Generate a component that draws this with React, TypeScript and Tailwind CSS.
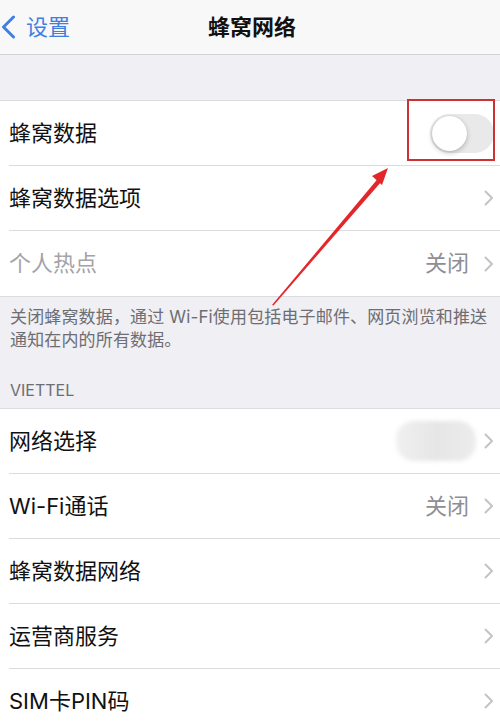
import React from 'react'

const font = { fontFamily: '"Inter", "Noto Sans CJK SC", sans-serif' }

function Chevron() {
  return (
    <svg width="10" height="16" viewBox="0 0 10 16" className="shrink-0">
      <path d="M1.5 1.5 L8 8 L1.5 14.5" fill="none" stroke="#c4c4c8" strokeWidth="2" strokeLinecap="round" strokeLinejoin="round" />
    </svg>
  )
}

interface RowProps {
  label: string
  value?: string
  muted?: boolean
  last?: boolean
  right?: React.ReactNode
}

function Row({ label, value, muted, last, right }: RowProps) {
  return (
    <div className="flex h-[65px] items-stretch bg-white pl-[9px]">
      <div className={`flex flex-1 items-center justify-between pr-[6px] ${last ? '' : 'border-b border-[#dcdce0]'}`}>
        <span className={`text-[22px] ${muted ? 'text-[#a3a3a8]' : 'text-[#111]'}`}>{label}</span>
        {right ?? (
          <div className="flex items-center gap-[15px]">
            {value && <span className="text-[22px] text-[#8e8e93]">{value}</span>}
            <Chevron />
          </div>
        )}
      </div>
    </div>
  )
}

function Toggle() {
  return (
    <div className="h-[39px] w-[64px] rounded-full bg-[#e9e9ea] p-[2px]">
      <div className="h-[35px] w-[35px] rounded-full bg-white shadow-[0_2px_5px_rgba(0,0,0,0.22),0_0_1px_rgba(0,0,0,0.2)]" />
    </div>
  )
}

export default function App() {
  return (
    <div className="relative h-[728px] w-[500px] overflow-hidden bg-[#efeff4]" style={font}>
      {/* Nav bar */}
      <div className="relative flex h-[55px] items-center border-b border-[#d3d3d6] bg-[#f8f8f8]">
        <div className="flex items-center gap-[10px] pl-[1px] text-[#3f7fe0]">
          <svg width="15" height="24" viewBox="0 0 15 24">
            <path d="M12.5 2 L2.5 12 L12.5 22" fill="none" stroke="#3f7fe0" strokeWidth="3" strokeLinecap="round" strokeLinejoin="round" />
          </svg>
          <span className="text-[22px]">设置</span>
        </div>
        <span className="absolute left-1/2 -translate-x-1/2 pl-[4px] text-[22px] font-semibold text-[#111]">蜂窝网络</span>
      </div>

      <div className="h-[45px]" />

      {/* Group 1 */}
      <div className="border-y border-[#dcdce0]">
        <Row label="蜂窝数据" right={<Toggle />} />
        <Row label="蜂窝数据选项" />
        <Row label="个人热点" value="关闭" muted last />
      </div>

      <p className="px-[10px] pt-[9px] text-[17px] leading-[23px] tracking-[0.15px] text-[#6d6d72]">
        关闭蜂窝数据，通过 Wi-Fi使用包括电子邮件、网页浏览和推送通知在内的所有数据。
      </p>

      <div className="px-[10px] pt-[28px] pb-[8px] text-[16px] leading-[20px] text-[#6d6d72]">VIETTEL</div>

      {/* Group 2 */}
      <div className="border-t border-[#dcdce0]">
        <Row
          label="网络选择"
          right={
            <div className="flex items-center gap-[8px]">
              <div className="h-[40px] w-[80px] rounded-[18px] bg-[linear-gradient(90deg,#f0f0f0,#e6e6e6_50%,#ececec)] blur-[2px]" />
              <Chevron />
            </div>
          }
        />
        <Row label="Wi-Fi通话" value="关闭" />
        <Row label="蜂窝数据网络" />
        <Row label="运营商服务" />
        <Row label="SIM卡PIN码" />
      </div>

      {/* Annotation overlay */}
      <div className="absolute left-[407px] top-[99px] h-[62px] w-[88px] border-2 border-[#cc3232]" />
      <svg className="pointer-events-none absolute left-0 top-0" width="500" height="728">
        <polygon points="272,305 378,178.5 381.5,181.5 273.5,305.5" fill="#e3262a" />
        <polygon points="388,168 372,176 382,185" fill="#e3262a" />
      </svg>
    </div>
  )
}
